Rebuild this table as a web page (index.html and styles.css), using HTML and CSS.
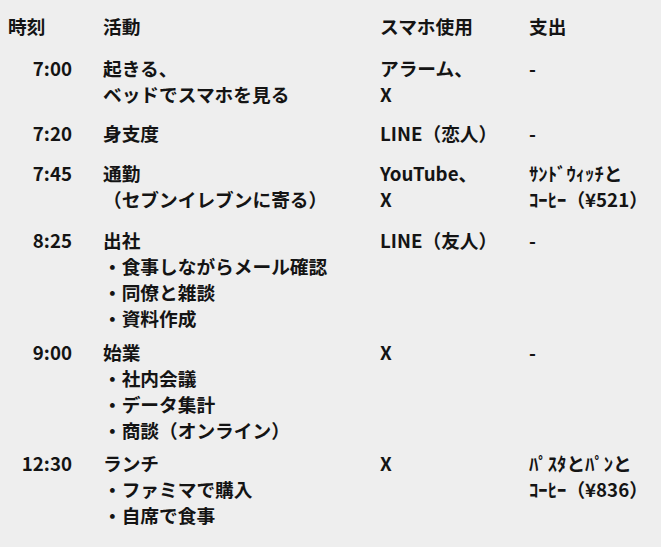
FILE: index.html
```html
<!DOCTYPE html>
<html lang="ja">
<head>
<meta charset="utf-8">
<title>一日のスケジュール</title>
<link rel="stylesheet" href="styles.css">
</head>
<body>
<div class="schedule">
  <div class="row head">
    <div class="time">時刻</div>
    <div class="act">活動</div>
    <div class="phone">スマホ使用</div>
    <div class="cost">支出</div>
  </div>
  <div class="row">
    <div class="time">7:00</div>
    <div class="act">起きる、<br>ベッドでスマホを見る</div>
    <div class="phone">アラーム、<br>X</div>
    <div class="cost">-</div>
  </div>
  <div class="row">
    <div class="time">7:20</div>
    <div class="act">身支度</div>
    <div class="phone">LINE（恋人）</div>
    <div class="cost">-</div>
  </div>
  <div class="row tall">
    <div class="time">7:45</div>
    <div class="act">通勤<br>（セブンイレブンに寄る）</div>
    <div class="phone">YouTube、<br>X</div>
    <div class="cost">ｻﾝﾄﾞｳｨｯﾁと<br>ｺｰﾋｰ（¥521）</div>
  </div>
  <div class="row list">
    <div class="time">8:25</div>
    <div class="act">出社
      <ul class="sub">
        <li>・食事しながらメール確認</li>
        <li>・同僚と雑談</li>
        <li>・資料作成</li>
      </ul>
    </div>
    <div class="phone">LINE（友人）</div>
    <div class="cost">-</div>
  </div>
  <div class="row list">
    <div class="time">9:00</div>
    <div class="act">始業
      <ul class="sub">
        <li>・社内会議</li>
        <li>・データ集計</li>
        <li>・商談（オンライン）</li>
      </ul>
    </div>
    <div class="phone">X</div>
    <div class="cost">-</div>
  </div>
  <div class="row list">
    <div class="time">12:30</div>
    <div class="act">ランチ
      <ul class="sub">
        <li>・ファミマで購入</li>
        <li>・自席で食事</li>
      </ul>
    </div>
    <div class="phone">X</div>
    <div class="cost">ﾊﾟｽﾀとﾊﾟﾝと<br>ｺｰﾋｰ（¥836）</div>
  </div>
</div>
</body>
</html>
```

FILE: styles.css
```css
html, body {
  background: #eeeeee;
}
body {
  margin: 8px;
  font-family: "Noto Sans CJK JP", "Noto Sans", sans-serif;
  font-size: 18.7px;
  font-weight: 700;
  line-height: 26px;
  color: #141414;
}
.schedule {
  display: flex;
  flex-direction: column;
}
.row {
  display: grid;
  grid-template-columns: 95px 277px 149px 1fr;
  padding-bottom: 13.5px;
}
.row.head {
  padding-top: 5px;
  padding-bottom: 15.5px;
}
.row.tall {
  padding-bottom: 15.5px;
}
.row.list {
  padding-bottom: 7.5px;
}
.time {
  text-align: right;
  padding-right: 31px;
}
.head .time {
  text-align: left;
}
.sub {
  list-style: none;
  margin: 0;
  padding: 0;
}
```
